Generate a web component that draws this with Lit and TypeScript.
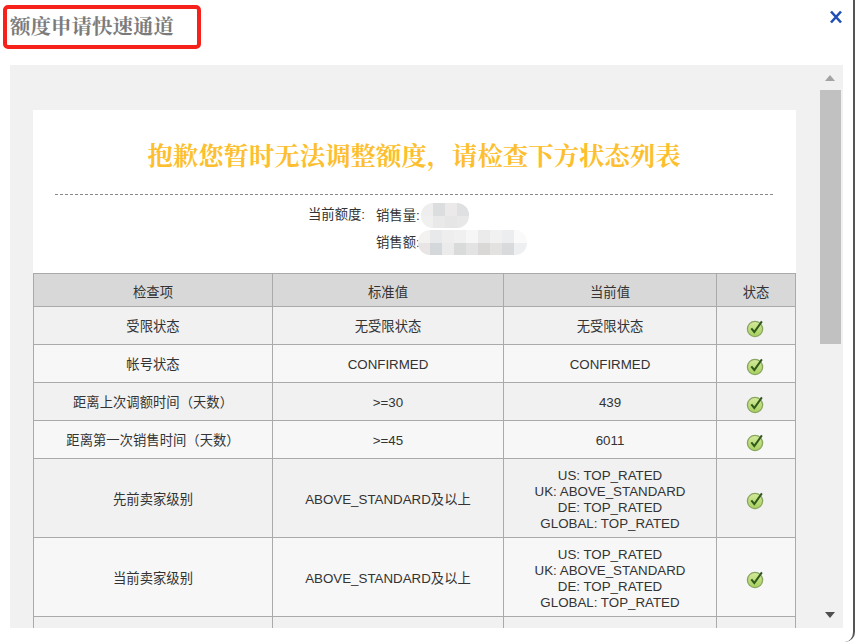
import { LitElement, html, css, svg } from "lit";
import { customElement } from "lit/decorators.js";

type Row = { name: string; std: string; cur: string[]; state: boolean };

const RATINGS = ["US: TOP_RATED", "UK: ABOVE_STANDARD", "DE: TOP_RATED", "GLOBAL: TOP_RATED"];

const ROWS: Row[] = [
  { name: "受限状态", std: "无受限状态", cur: ["无受限状态"], state: true },
  { name: "帐号状态", std: "CONFIRMED", cur: ["CONFIRMED"], state: true },
  { name: "距离上次调额时间（天数）", std: ">=30", cur: ["439"], state: true },
  { name: "距离第一次销售时间（天数）", std: ">=45", cur: ["6011"], state: true },
  { name: "先前卖家级别", std: "ABOVE_STANDARD及以上", cur: RATINGS, state: true },
  { name: "当前卖家级别", std: "ABOVE_STANDARD及以上", cur: RATINGS, state: true },
  { name: "", std: "", cur: [], state: false },
];

const M1 = [
  ["#eeeeef", "#dcdddf", "#ebe9e9", "#dfe0e1"],
  ["#f0f0f0", "#e9e9ea", "#e6e6e7", "#e8e8e9"],
];
const M2 = [
  ["#f4f1f1", "#e8e9eb", "#eeeeee", "#f0f0f0", "#f6f6f6", "#ebebeb", "#f1f1f1", "#ecedee", "#fafafa"],
  ["#e9e5e4", "#d4d8db", "#ebebec", "#d9dbdb", "#e3e3e4", "#d9d8d6", "#e3e2e1", "#d8dadb", "#eeeff1"],
];

const check = svg`<svg class="ok" width="20" height="20" viewBox="0 0 20 20">
  <defs><linearGradient id="g" x1="0" y1="0" x2="0" y2="1">
    <stop offset="0" stop-color="#d6ea9c"/><stop offset="1" stop-color="#a5cf5c"/>
  </linearGradient></defs>
  <circle cx="9.5" cy="11" r="7.6" fill="url(#g)" stroke="#8aa562" stroke-width="1.3"/>
  <path d="M5.8 10.4 L8.8 14 L16.4 3.4" fill="none" stroke="#2f5a1c" stroke-width="2"/>
</svg>`;

@customElement("app-root")
export class AppRoot extends LitElement {
  static styles = css`
    :host {
      display: block;
      width: 855px;
      height: 642px;
      position: relative;
      overflow: hidden;
      background: #fff;
      font-family: "Liberation Sans", "Noto Sans CJK SC", sans-serif;
      color: #333;
      font-size: 13.33px;
    }
    .modal {
      box-sizing: border-box;
      width: 855px;
      height: 642px;
      display: flex;
      flex-direction: column;
      background: #fff;
      border-right: 2px solid #555;
      border-bottom-right-radius: 10px;
    }
    .head {
      height: 65px;
      flex: none;
      display: flex;
      justify-content: space-between;
      align-items: flex-start;
      padding: 0 11px 0 10px;
    }
    .title {
      margin: 13px 0 0;
      font-family: "Noto Serif CJK SC", "Liberation Serif", "Noto Sans CJK SC", serif;
      font-size: 20.5px;
      font-weight: 700;
      line-height: 24px;
      color: #7b7b7b;
    }
    .close {
      margin: 10px 0 0 0;
      width: 12px;
      height: 14px;
    }
    .mark {
      position: absolute;
      left: 3px;
      top: 5px;
      width: 198px;
      height: 44px;
      box-sizing: border-box;
      border: 4px solid #f5211a;
      border-radius: 5px;
    }
    .frame {
      width: 833px;
      height: 563px;
      margin-left: 10px;
      flex: none;
      background: #f1f1f1;
      position: relative;
      overflow: hidden;
    }
    .content {
      width: 763px;
      margin: 45px 0 0 23px;
    }
    .notice {
      background: #fff;
      height: 163px;
      box-sizing: border-box;
      padding-top: 27px;
    }
    .notice h2 {
      margin: 0 23px 0 22px;
      text-align: center;
      font-family: "Noto Serif CJK SC", "Liberation Serif", "Noto Sans CJK SC", serif;
      font-size: 25.4px;
      line-height: 34px;
      height: 57px;
      font-weight: 700;
      color: #fdbf2d;
      border-bottom: 1px dashed #888;
    }
    .quota {
      display: grid;
      grid-template-columns: auto auto;
      justify-content: start;
      column-gap: 11px;
      padding: 8px 0 0 275px;
    }
    .amount {
      display: flex;
      align-items: center;
      margin-bottom: 2px;
    }
    .label {
      line-height: 24px;
    }
    .mosaic {
      display: inline-grid;
      grid-auto-rows: 12.5px;
      border-radius: 12px;
      overflow: hidden;
      filter: blur(0.5px);
    }
    .m1 { grid-template-columns: repeat(4, 12px); margin-left: 1px; }
    .m2 { grid-template-columns: repeat(9, 12.1px); margin-left: -2px; }
    table {
      width: 762px;
      border-collapse: collapse;
      table-layout: fixed;
    }
    th, td {
      border: 1px solid #aaa;
      text-align: center;
      vertical-align: middle;
      font-weight: 400;
      line-height: 16px;
      padding: 8px 4px 6px;
      background: #f1f1f1;
    }
    td.multi { padding: 9px 4px 5px; }
    th {
      background: #d8d8d8;
      padding: 11px 4px 5px;
    }
    tr.even td { background: #f7f7f7; }
    td.state { padding: 7px 0; height: 23px; }
    td.blank { height: 60px; }
    .ok { display: block; margin: 3px auto -1px; transform: translateX(-0.5px); }
    .line { display: block; }
    .bar {
      position: absolute;
      right: 0;
      top: 0;
      bottom: 0;
      width: 23px;
      background: #f1f1f1;
    }
    .thumb {
      position: absolute;
      left: 0;
      top: 25px;
      width: 21px;
      height: 254px;
      background: #c1c1c1;
    }
    .arrow {
      position: absolute;
      left: 5px;
      width: 0;
      height: 0;
      border-left: 5.5px solid transparent;
      border-right: 5.5px solid transparent;
    }
    .up { top: 10px; border-bottom: 6px solid #a3a3a3; }
    .down { bottom: 10px; border-top: 6px solid #505050; }
  `;

  private mosaic(cls: string, rows: string[][]) {
    return html`<span class="mosaic ${cls}">
      ${rows.flat().map((c) => html`<i style="background:${c}"></i>`)}
    </span>`;
  }

  render() {
    return html`
      <div class="modal">
        <header class="head">
          <h1 class="title">额度申请快速通道</h1>
          <svg class="close" viewBox="0 0 12 14">
            <path d="M1 1.5 L11 12.5 M11 1.5 L1 12.5" stroke="#1f4fb5" stroke-width="2.6" fill="none" />
          </svg>
        </header>
        <div class="frame">
          <div class="content">
            <section class="notice">
              <h2>抱歉您暂时无法调整额度，请检查下方状态列表</h2>
              <div class="quota">
                <span class="label">当前额度:</span>
                <div>
                  <div class="amount"><span class="label">销售量:</span>${this.mosaic("m1", M1)}</div>
                  <div class="amount"><span class="label">销售额:</span>${this.mosaic("m2", M2)}</div>
                </div>
              </div>
            </section>
            <table>
              <colgroup>
                <col style="width:239px" /><col style="width:231px" /><col style="width:213px" /><col style="width:79px" />
              </colgroup>
              <thead>
                <tr><th>检查项</th><th>标准值</th><th>当前值</th><th>状态</th></tr>
              </thead>
              <tbody>
                ${ROWS.map((r, i) => {
                  const cls = r.cur.length > 1 ? "multi" : "";
                  return html`<tr class=${i % 2 ? "even" : ""}>
                    <td class=${cls}>${r.name}</td>
                    <td class=${cls}>${r.std}</td>
                    <td class=${cls}>${r.cur.map((l) => html`<span class="line">${l}</span>`)}</td>
                    <td class=${r.state ? "state" : "blank"}>${r.state ? check : ""}</td>
                  </tr>`;
                })}
              </tbody>
            </table>
          </div>
          <div class="bar">
            <span class="arrow up"></span>
            <div class="thumb"></div>
            <span class="arrow down"></span>
          </div>
        </div>
      </div>
      <div class="mark"></div>
    `;
  }
}
